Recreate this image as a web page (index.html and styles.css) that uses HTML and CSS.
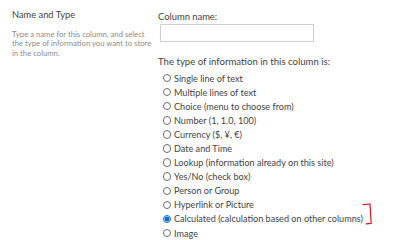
FILE: index.html
```html
<!DOCTYPE html>
<html>
<head>
<meta charset="utf-8">
<link rel="stylesheet" href="styles.css">
</head>
<body>
<div class="page">
  <div class="side">
    <div class="side-title">Name and Type</div>
    <div class="side-desc">Type a name for this column, and select the type of information you want to store in the column.</div>
  </div>
  <div class="main">
    <div class="label">Column name:</div>
    <div class="input"></div>
    <div class="type-label">The type of information in this column is:</div>
    <ul class="options">
      <li class="opt"><span class="radio"></span><span>Single line of text</span></li>
      <li class="opt"><span class="radio"></span><span>Multiple lines of text</span></li>
      <li class="opt"><span class="radio"></span><span>Choice (menu to choose from)</span></li>
      <li class="opt"><span class="radio"></span><span>Number (1, 1.0, 100)</span></li>
      <li class="opt"><span class="radio"></span><span>Currency ($, ¥, €)</span></li>
      <li class="opt"><span class="radio"></span><span>Date and Time</span></li>
      <li class="opt"><span class="radio"></span><span>Lookup (information already on this site)</span></li>
      <li class="opt"><span class="radio"></span><span>Yes/No (check box)</span></li>
      <li class="opt"><span class="radio"></span><span>Person or Group</span></li>
      <li class="opt"><span class="radio"></span><span>Hyperlink or Picture</span></li>
      <li class="opt"><span class="radio checked"></span><span>Calculated (calculation based on other columns)</span></li>
      <li class="opt"><span class="radio"></span><span>Image</span></li>
    </ul>
  </div>
  <svg class="bracket" width="12" height="24" viewBox="0 0 12 24"><path d="M1 1.6 L8 1 L9.2 20.3 L4.2 20.8" fill="none" stroke="#e0141e" stroke-width="1.2" stroke-linecap="round" stroke-linejoin="round"/></svg>
</div>
</body>
</html>
```
FILE: styles.css
```css
html, body {
  margin: 0;
  padding: 0;
  background: #fff;
}
body {
  font-family: Lato, "Open Sans", sans-serif;
  color: #444;
  width: 400px;
  height: 240px;
  overflow: hidden;
}
.page {
  display: flex;
  position: relative;
}
.side {
  width: 143px;
  padding: 9px 0 0 12px;
  flex: none;
}
.side-title {
  font-size: 9.3px;
  line-height: 12px;
  color: #444;
}
.side-desc {
  margin-top: 9px;
  font-size: 7.7px;
  line-height: 9.3px;
  color: #8c8c8c;
}
.main {
  padding: 11px 0 0 3px;
  flex: 1;
}
.label {
  font-size: 9.4px;
  line-height: 12px;
  color: #444;
}
.input {
  margin: 1px 0 0 2px;
  border: 1px solid #d0d0d0;
  box-sizing: border-box;
  width: 154px;
  height: 18px;
}
.type-label {
  margin-top: 14px;
  font-size: 9.6px;
  line-height: 12px;
  color: #444;
}
.options {
  list-style: none;
  margin: 3px 0 0 0;
  padding: 0 0 0 4.5px;
}
.opt {
  display: flex;
  align-items: center;
  height: 14.1px;
  font-size: 9.1px;
  color: #444;
  white-space: nowrap;
}
.radio {
  width: 8.5px;
  height: 8.5px;
  border: 1px solid #6e6e6e;
  border-radius: 50%;
  box-sizing: border-box;
  margin-right: 3px;
  flex: none;
}
.radio.checked {
  border-color: #0a6fd8;
  background: radial-gradient(circle, #0a6fd8 0 2.3px, #fff 2.7px);
}
.bracket {
  position: absolute;
  left: 362px;
  top: 203px;
}
```
